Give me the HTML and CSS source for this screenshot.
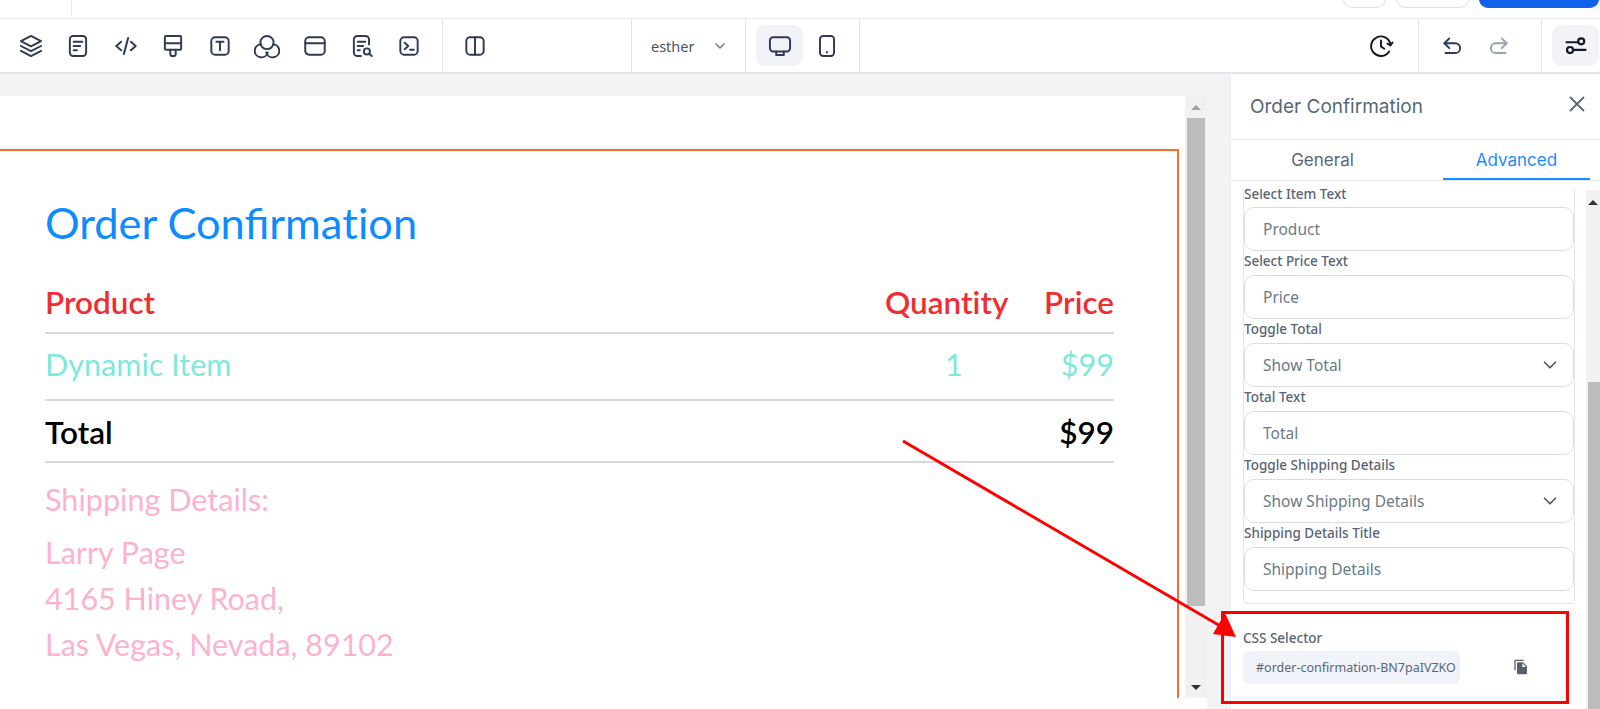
FILE: index.html
```html
<!DOCTYPE html>
<html lang="en">
<head>
  <meta charset="UTF-8">
  <title>Order Confirmation</title>
  <link rel="stylesheet" href="styles.css">
</head>
<body>

  <div class="topbar">
    <div class="topbar-left"></div>
    <div class="topbar-actions">
      <span class="top-btn small"></span>
      <span class="top-btn wide"></span>
      <span class="top-btn primary"></span>
    </div>
  </div>

  <div class="toolbar">
    <div class="tool-group tools">
      <svg class="icon" viewBox="0 0 24 24"><path d="M12 2.700 21.300 7.500 12 12.300 2.700 7.500z"/><path d="M2.700 12 12 16.800 21.300 12"/><path d="M2.700 16.500 12 21.300l9.300-4.800"/></svg>
      <svg class="icon" viewBox="0 0 24 24"><rect x="4.500" y="2.700" width="15" height="18.600" rx="3"/><path d="M8 8h8M8 12h6M8 16h3"/></svg>
      <svg class="icon" viewBox="0 0 24 24"><path d="M7.500 8 3 12l4.500 4M16.500 8l4.500 4-4.500 4M14 4.500l-4 15"/></svg>
      <svg class="icon" viewBox="0 0 24 24"><path d="M4.500 3.500a.8.8 0 0 1 .8-.8h13.400a.8.8 0 0 1 .8.8v11a1 1 0 0 1-1 1h-13a1 1 0 0 1-1-1z"/><path d="M4.500 9.500h15"/><path d="M9.500 15.500v4a1.800 1.800 0 0 0 1.800 1.800h1.400a1.800 1.800 0 0 0 1.800-1.800v-4"/></svg>
      <svg class="icon" viewBox="0 0 24 24"><rect x="4" y="4" width="16" height="16" rx="3.500"/><path d="M8.700 8h6.600M12 8v8"/></svg>
      <svg class="icon" viewBox="0 0 24 24"><circle cx="12" cy="8.800" r="6.100"/><path d="M6.400 10.300a6.100 6.100 0 1 0 6.300 7.600M17.600 10.300a6.100 6.100 0 1 1-6.300 7.600"/></svg>
      <svg class="icon" viewBox="0 0 24 24"><rect x="3" y="4" width="18" height="16" rx="3.500"/><path d="M3 9.500h18"/></svg>
      <svg class="icon" viewBox="0 0 24 24"><path d="M18.500 10.500V6a3.300 3.300 0 0 0-3.300-3.300H7.800A3.300 3.300 0 0 0 4.500 6v12a3.300 3.300 0 0 0 3.300 3.300H11"/><path d="M8 8h7M8 12h5M8 16h2"/><circle cx="16.500" cy="17" r="2.800"/><path d="m18.800 19.300 2.200 2"/></svg>
      <svg class="icon" viewBox="0 0 24 24"><rect x="4" y="4" width="16" height="16" rx="3.500"/><path d="m8 9 3.300 3L8 15M13 15.500h3.500"/></svg>
    </div>
    <div class="tool-group split">
      <svg class="icon" viewBox="0 0 24 24"><rect x="4" y="4" width="16" height="16" rx="3.500"/><path d="M12 4v16"/></svg>
    </div>
    <div class="tool-group user-select">
      <span>esther</span>
      <svg class="chevron" viewBox="0 0 24 24"><path d="m6 9 6 6 6-6"/></svg>
    </div>
    <div class="tool-group devices">
      <span class="icon-btn active">
        <svg class="icon" viewBox="0 0 24 24"><rect x="2.700" y="4" width="18.600" height="13" rx="3"/><path d="M8.500 17v3.300h7V17"/></svg>
      </span>
      <span class="icon-btn">
        <svg class="icon" viewBox="0 0 24 24"><rect x="5.500" y="2.700" width="13" height="18.600" rx="3"/><path d="M12 17.500v.5"/></svg>
      </span>
    </div>
    <div class="tool-group history">
      <svg class="icon dark" viewBox="0 0 24 24"><path d="M20.700 10.300A9 9 0 1 0 19.500 17"/><path d="M12 7v5.500l3 2"/><path d="m18 9.800 2.700 1.700 2-2.700"/></svg>
    </div>
    <div class="tool-group undo">
      <svg class="icon" viewBox="0 0 24 24"><path d="M9.500 5 5 9.500 9.500 14"/><path d="M5 9.500h10a4.500 4.500 0 0 1 0 9H6"/></svg>
      <svg class="icon muted" viewBox="0 0 24 24"><path d="M14.500 5 19 9.500 14.500 14"/><path d="M19 9.500H9a4.500 4.500 0 0 0 0 9h9"/></svg>
    </div>
    <div class="tool-group settings">
      <span class="icon-btn active">
        <svg class="icon dark thick" viewBox="0 0 24 24"><path d="M3.200 8.500h10.500M10.500 15.500h10.300"/><circle cx="16.800" cy="7.700" r="2.800"/><circle cx="6.500" cy="15.700" r="2.800"/></svg>
      </span>
    </div>
  </div>

  <div class="workspace">
    <div class="canvas">
      <div class="canvas-inner">
        <div class="canvas-page">
          <div class="order-frame">
            <h1 class="order-title">Order Confirma<span class="no-lig">ti</span>on</h1>
            <div class="order-row head">
              <span class="col-name">Product</span>
              <span class="col-qty no-lig">Quantity</span>
              <span class="col-price">Price</span>
            </div>
            <div class="order-row item">
              <span class="col-name">Dynamic Item</span>
              <span class="col-qty center">1</span>
              <span class="col-price">$99</span>
            </div>
            <div class="order-row total">
              <span class="col-name">Total</span>
              <span class="col-price">$99</span>
            </div>
            <h2 class="ship-title">Shipping Details:</h2>
            <p class="ship-address">Larry Page<br>4165 Hiney Road,<br>Las Vegas, Nevada, 89102</p>
          </div>
        </div>
        <div class="scroll canvas-scroll">
          <span class="arrow up grey"></span>
          <span class="thumb"></span>
          <span class="arrow down"></span>
        </div>
      </div>
    </div>

    <aside class="panel">
      <div class="panel-head">
        <span>Order Confirmation</span>
        <svg class="close" viewBox="0 0 24 24"><path d="M5 5l14 14M19 5 5 19"/></svg>
      </div>
      <div class="tabs">
        <span class="tab">General</span>
        <span class="tab current">Advanced</span>
      </div>
      <div class="panel-body">
        <div class="fields">
          <label class="first">Select Item Text</label>
          <div class="field">Product</div>
          <label>Select Price Text</label>
          <div class="field">Price</div>
          <label>Toggle Total</label>
          <div class="field select">Show Total
            <svg class="chevron" viewBox="0 0 24 24"><path d="m6 9 6 6 6-6"/></svg>
          </div>
          <label>Total Text</label>
          <div class="field">Total</div>
          <label>Toggle Shipping Details</label>
          <div class="field select">Show Shipping Details
            <svg class="chevron" viewBox="0 0 24 24"><path d="m6 9 6 6 6-6"/></svg>
          </div>
          <label>Shipping Details Title</label>
          <div class="field">Shipping Details</div>
        </div>
        <div class="selector">
          <label>CSS Selector</label>
          <div class="selector-row">
            <span class="selector-value">#order-confirmation-BN7paIVZKO</span>
            <svg class="copy" viewBox="0 0 24 24"><path d="M16 1H4c-1.100 0-2 .9-2 2v14h2V3h12zm-1 4 6 6v10c0 1.100-.9 2-2 2H8c-1.100 0-2-.9-2-2l.01-14c0-1.100.89-2 1.990-2zm-1 7h5.500L14 6.500z"/></svg>
          </div>
        </div>
      </div>
      <div class="scroll panel-scroll">
        <span class="arrow up"></span>
        <span class="thumb"></span>
      </div>
    </aside>
  </div>

  <!-- annotation drawn on top of the screenshot -->
  <div class="callout-box"></div>
  <svg class="callout-arrow" viewBox="0 0 1600 709">
    <line x1="903" y1="441" x2="1222" y2="627" stroke="#ff0000" stroke-width="3"/>
    <polygon points="1236,637 1213,634 1225,613" fill="#ff0000"/>
  </svg>

</body>
</html>
```

FILE: styles.css
```css
/* Base Styles */
* {
  box-sizing: border-box;
}

body {
  margin: 0;
  height: 709px;
  overflow: hidden;
  background-color: #fff;
  font-family: "Noto Sans", "Open Sans", sans-serif;
  color: #2c3e50;
}

svg {
  display: block;
  flex-shrink: 0;
}

/* Top strip, cut off by the screenshot */
.topbar {
  height: 19px;
  display: flex;
  justify-content: space-between;
  border-bottom: 1px solid #e8e9ec;
  overflow: hidden;
}

.topbar-left {
  width: 72px;
  height: 16px;
  border-right: 1px solid #e8e9ec;
}

.topbar-actions {
  display: flex;
  gap: 10px;
  padding-right: 1px;
}

.top-btn {
  display: block;
  height: 9px;
  margin-top: -1px;
  border: 1px solid #dfe1e6;
  border-top: none;
  border-radius: 0 0 9px 9px;
}

.top-btn.small {
  width: 43px;
}

.top-btn.wide {
  width: 73px;
}

.top-btn.primary {
  width: 120px;
  background-color: #1360ea;
  border-color: #1360ea;
}

/* Toolbar */
.toolbar {
  height: 55px;
  display: flex;
  background-color: #fff;
  border-bottom: 2px solid #e5e6e9;
}

.tool-group {
  display: flex;
  flex-shrink: 0;
  align-items: center;
  height: 53px;
  border-right: 1px solid #e5e6ea;
}

.tools {
  width: 443px;
  padding-left: 18px;
  gap: 21.250px;
}

.split {
  width: 189px;
  padding-left: 19px;
}

.user-select {
  width: 114px;
  padding-left: 19px;
  font-size: 14.500px;
  color: #4b5563;
}

.user-select .chevron {
  margin-left: 17px;
}

.devices {
  width: 114px;
  padding-left: 10px;
}

.history {
  width: 559px;
  justify-content: flex-end;
  padding-right: 24px;
}

.undo {
  width: 123px;
  padding-left: 20px;
  gap: 21px;
}

.settings {
  width: 58px;
  border-right: none;
  padding-left: 10px;
}

.icon {
  width: 26px;
  height: 26px;
  fill: none;
  stroke: #2f3b52;
  stroke-width: 1.800;
  stroke-linecap: round;
  stroke-linejoin: round;
}

.icon.dark {
  stroke: #111827;
}

.icon.thick {
  stroke-width: 2;
}

.icon.muted {
  stroke: #9aa3af;
}

.icon-btn {
  width: 47px;
  height: 41px;
  display: flex;
  align-items: center;
  justify-content: center;
  border-radius: 9px;
}

.icon-btn.active {
  background-color: #f2f3f7;
}

.chevron {
  width: 16px;
  height: 16px;
  fill: none;
  stroke: #6b7280;
  stroke-width: 2;
  stroke-linecap: round;
  stroke-linejoin: round;
}

/* Workspace */
.workspace {
  height: 635px;
  display: flex;
}

.canvas {
  width: 1230px;
  padding-top: 22px;
  background-color: #f2f3f5;
}

.canvas-inner {
  width: 1207px;
  height: 613px;
  display: flex;
  align-items: flex-start;
  background-color: #fff;
}

.canvas-page {
  width: 1185px;
  height: 602px;
  padding-top: 53px;
  overflow: hidden;
}

.order-frame {
  width: 1181px;
  height: 620px;
  margin-left: -2px;
  padding: 31px 63px 0 45px;
  border: 2px solid #ff6a30;
  font-family: Lato, sans-serif;
}

.no-lig {
  font-variant-ligatures: none;
}

.order-title {
  margin: 0 0 20px;
  font-size: 43.400px;
  line-height: 80px;
  font-weight: 400;
  color: #0d8bff;
}

.order-row {
  display: flex;
  align-items: center;
  height: 67px;
  font-size: 30.600px;
  border-bottom: 2px solid #d9d9d9;
}

.order-row.head {
  height: 52px;
  align-items: flex-start;
  font-size: 31.500px;
  font-weight: 600;
  color: #ee2e33;
  line-height: 40px;
}

.order-row.item {
  padding-bottom: 4px;
  color: #7ee8db;
}

.order-row.total {
  height: 62px;
  padding-top: 1px;
  font-size: 31.500px;
  font-weight: 600;
  color: #000;
}

.col-name {
  flex: 1;
}

.col-qty {
  width: 123px;
  margin-right: 36px;
  white-space: nowrap;
}

.col-qty.center {
  padding-left: 60px;
}

.col-price {
  width: 70px;
  text-align: right;
}

.ship-title {
  margin: 15px 0 7px;
  font-size: 30.600px;
  line-height: 44px;
  font-weight: 400;
  color: #fbb3d0;
}

.ship-address {
  margin: 0;
  font-size: 30.500px;
  line-height: 46px;
  color: #fbb3d0;
}

/* Scrollbars */
.scroll {
  display: flex;
  flex-direction: column;
  align-items: center;
  background-color: #f1f1f1;
}

.canvas-scroll {
  width: 22px;
  height: 602px;
}

.scroll .thumb {
  display: block;
  background-color: #bdbdbd;
}

.canvas-scroll .thumb {
  width: 18px;
  height: 488px;
}

.arrow {
  display: block;
  width: 0;
  height: 0;
  border-left: 5px solid transparent;
  border-right: 5px solid transparent;
}

.arrow.up {
  margin-top: 9px;
  margin-bottom: 8px;
  border-bottom: 5px solid #333;
}

.arrow.up.grey {
  border-bottom-color: #a3a3a3;
}

.arrow.down {
  margin-top: 79px;
  border-top: 5px solid #333;
}

/* Settings panel */
.panel {
  position: relative;
  width: 370px;
  border-left: 1px solid #eceef1;
  background-color: #fff;
}

.panel-head {
  height: 66px;
  display: flex;
  align-items: center;
  justify-content: space-between;
  padding: 0 11px 0 19px;
  font-family: Inter, sans-serif;
  font-size: 19px;
  color: #566777;
  border-bottom: 1px solid #e5e7eb;
}

.close {
  width: 24px;
  height: 24px;
  margin-bottom: 5px;
  fill: none;
  stroke: #566777;
  stroke-width: 1.800;
}

.tabs {
  height: 41px;
  display: flex;
  font-family: Inter, sans-serif;
  font-size: 17px;
  border-bottom: 1px solid #e5e7eb;
}

.tab {
  width: 183px;
  height: 40px;
  padding-top: 10px;
  text-align: center;
  color: #566777;
}

.tab.current {
  width: 147px;
  margin-left: 29px;
  color: #1a8cff;
  border-bottom: 2px solid #1a8cff;
}

.panel-body {
  padding: 8px 0 0 12px;
}

.fields {
  width: 332px;
  height: 415px;
  overflow: hidden;
  border: 1px solid #e3e6ec;
  border-top: none;
  border-radius: 0 0 4px 4px;
}

.fields label {
  display: block;
  height: 22px;
  font-size: 13.500px;
  line-height: 17px;
  font-weight: 500;
  color: #596474;
}

.fields label.first {
  margin-top: -3px;
}

.field {
  height: 44px;
  margin-bottom: 2px;
  padding-left: 18px;
  border: 1px solid #d9dce3;
  border-radius: 10px;
  display: flex;
  align-items: center;
  justify-content: space-between;
  font-size: 15.500px;
  color: #6b7a88;
}

.fields label.first + .field {
  margin-top: -1px;
}

.field.select {
  padding-right: 12px;
}

.field .chevron {
  width: 22px;
  height: 22px;
  stroke: #4b5563;
  stroke-width: 1.800;
}

.selector {
  padding-top: 26px;
}

.selector label {
  display: block;
  height: 17px;
  margin-bottom: 4px;
  font-size: 13.500px;
  line-height: 17px;
  font-weight: 500;
  color: #596474;
}

.selector-row {
  display: flex;
  align-items: center;
}

.selector-value {
  width: 217px;
  height: 33px;
  padding-left: 13px;
  line-height: 33px;
  font-size: 12.500px;
  white-space: nowrap;
  border-radius: 6px;
  background-color: #f0f4f8;
  color: #566777;
}

.copy {
  width: 16px;
  height: 16px;
  margin: 0 0 2px 53px;
  fill: #56616d;
}

.panel-scroll {
  position: absolute;
  top: 116px;
  right: 0;
  width: 14px;
  height: 519px;
}

.panel-scroll .arrow.up {
  margin-top: 10px;
}

.panel-scroll .thumb {
  width: 12px;
  height: 340px;
  align-self: flex-end;
  margin-top: 169px;
}

/* Annotation */
.callout-box {
  position: absolute;
  left: 1221px;
  top: 611px;
  width: 348px;
  height: 93px;
  border: 3px solid #ff0000;
}

.callout-arrow {
  position: absolute;
  left: 0;
  top: 0;
  width: 1600px;
  height: 709px;
  pointer-events: none;
}
```
